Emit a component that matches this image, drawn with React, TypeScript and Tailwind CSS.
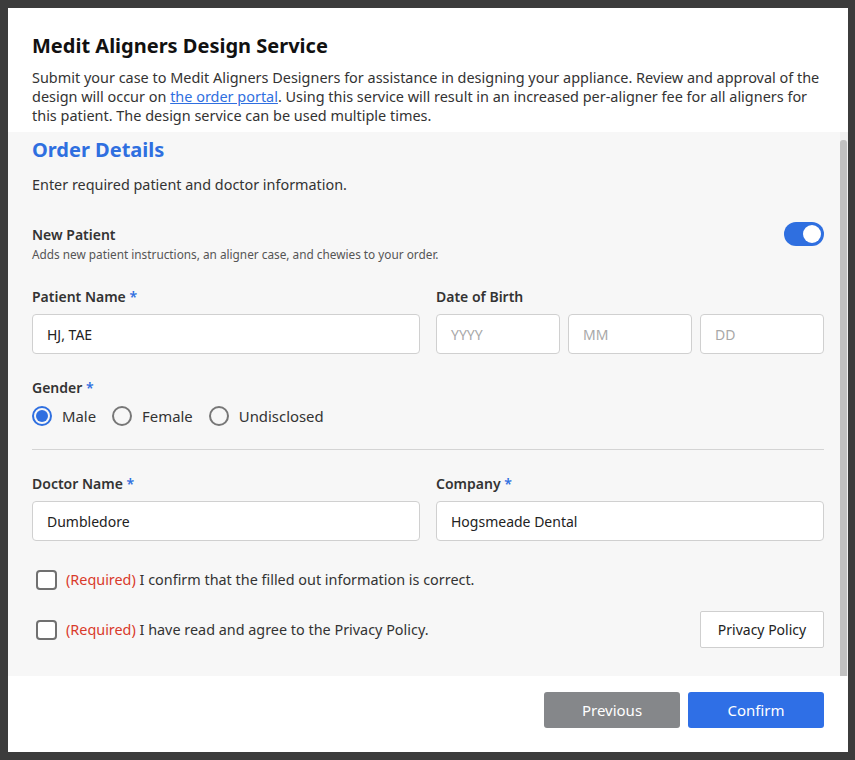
import React, { useState } from 'react';

const font = { fontFamily: '"Noto Sans", "Open Sans", sans-serif' };

const Label: React.FC<{ text: string; required?: boolean }> = ({ text, required }) => (
  <div className="text-[14px] leading-[20px] font-semibold text-[#333] mb-[7px]">
    {text}
    {required && <span className="text-[#2f6fe0]"> *</span>}
  </div>
);

const TextInput: React.FC<{ value?: string; placeholder?: string }> = ({ value, placeholder }) => (
  <div className="h-[40px] w-full rounded-[4px] border border-[#d0d0d0] bg-white px-[14px] flex items-center text-[14px]">
    {value ? <span className="text-[#222]">{value}</span> : <span className="text-[#a8a8a8]">{placeholder}</span>}
  </div>
);

const Radio: React.FC<{ label: string; checked: boolean; onClick: () => void }> = ({ label, checked, onClick }) => (
  <button onClick={onClick} className="flex items-center gap-[10px] text-[14.9px] leading-[20px] text-[#333]">
    {checked ? (
      <span className="w-[20px] h-[20px] rounded-full border-2 border-[#2f6fe0] flex items-center justify-center">
        <span className="w-[12px] h-[12px] rounded-full bg-[#2f6fe0]" />
      </span>
    ) : (
      <span className="w-[20px] h-[20px] rounded-full border-2 border-[#777]" />
    )}
    {label}
  </button>
);

const Check: React.FC<{ text: string }> = ({ text }) => (
  <div className="flex items-center gap-[9px] ml-[4px]">
    <span className="w-[21px] h-[20px] rounded-[4px] border-2 border-[#707070] bg-white" />
    <span className="text-[14.4px] leading-[20px] text-[#333]">
      <span className="text-[#d93a2b]">(Required)</span> {text}
    </span>
  </div>
);

export default function App() {
  const [gender, setGender] = useState('Male');
  const [newPatient, setNewPatient] = useState(true);

  return (
    <div className="w-[855px] h-[760px] bg-[#3c3c3c] p-[8px]" style={font}>
      <div className="w-[840px] h-[744px] bg-white flex flex-col">
        {/* Header */}
        <div className="px-[24px] pt-[24px] pb-[7px]">
          <h2 className="text-[20px] leading-[28px] font-bold text-[#111]">Medit Aligners Design Service</h2>
          <p className="mt-[8px] text-[14.45px] leading-[19px] text-[#333]">
            Submit your case to Medit Aligners Designers for assistance in designing your appliance. Review and approval of the
            design will occur on <a className="text-[#2f6fe0] underline">the order portal</a>. Using this service will result in an increased per-aligner fee for all aligners for
            this patient. The design service can be used multiple times.
          </p>
        </div>

        {/* Body */}
        <div className="flex-1 flex bg-[#f7f7f7] min-h-0">
          <div className="flex-1 pl-[24px] pr-[16px] pt-[4px] pb-[28px]">
            <h3 className="text-[20px] leading-[28px] font-bold text-[#2f6fe0]">Order Details</h3>
            <p className="mt-[11px] text-[14.4px] leading-[20px] text-[#333]">Enter required patient and doctor information.</p>

            <div className="mt-[30px] flex items-start justify-between">
              <div>
                <div className="text-[14px] leading-[20px] font-semibold text-[#333]">New Patient</div>
                <div className="text-[11.8px] leading-[16px] text-[#555] mt-[1px]">
                  Adds new patient instructions, an aligner case, and chewies to your order.
                </div>
              </div>
              <button
                onClick={() => setNewPatient(!newPatient)}
                className={`-mt-[3px] w-[40px] h-[24px] rounded-full flex items-center px-[3px] ${newPatient ? 'bg-[#2f6fe0] justify-end' : 'bg-[#bbb] justify-start'}`}
              >
                <span className="w-[18px] h-[18px] rounded-full bg-white" />
              </button>
            </div>

            <div className="mt-[25px] grid grid-cols-2 gap-[16px]">
              <div>
                <Label text="Patient Name" required />
                <TextInput value="HJ, TAE" />
              </div>
              <div>
                <Label text="Date of Birth" />
                <div className="grid grid-cols-3 gap-[8px]">
                  <TextInput placeholder="YYYY" />
                  <TextInput placeholder="MM" />
                  <TextInput placeholder="DD" />
                </div>
              </div>
            </div>

            <div className="mt-[24px]">
              <div className="text-[14px] leading-[20px] font-semibold text-[#333] mb-[8px]">
                Gender<span className="text-[#2f6fe0]"> *</span>
              </div>
              <div className="flex items-center gap-[16px]">
                {['Male', 'Female', 'Undisclosed'].map((g) => (
                  <Radio key={g} label={g} checked={gender === g} onClick={() => setGender(g)} />
                ))}
              </div>
            </div>

            <div className="mt-[23px] mb-[24px] h-px bg-[#d4d4d4]" />

            <div className="grid grid-cols-2 gap-[16px]">
              <div>
                <Label text="Doctor Name" required />
                <TextInput value="Dumbledore" />
              </div>
              <div>
                <Label text="Company" required />
                <TextInput value="Hogsmeade Dental" />
              </div>
            </div>

            <div className="mt-[29px]">
              <Check text="I confirm that the filled out information is correct." />
            </div>
            <div className="mt-[21px] flex items-center justify-between">
              <Check text="I have read and agree to the Privacy Policy." />
              <button className="w-[124px] h-[37px] bg-white border border-[#cfcfcf] rounded-[2px] text-[14px] text-[#222]">
                Privacy Policy
              </button>
            </div>
          </div>
          {/* scrollbar */}
          <div className="w-[8px] bg-[#f1f1f1] flex flex-col pt-[8px]">
            <div className="flex-1 w-[7px] bg-[#c1c1c1] rounded-t-[3px]" />
          </div>
        </div>

        {/* Footer */}
        <div className="flex justify-end gap-[8px] px-[24px] pt-[16px] pb-[24px]">
          <button className="w-[136px] h-[36px] rounded-[3px] bg-[#85878a] text-white text-[15px]">Previous</button>
          <button className="w-[136px] h-[36px] rounded-[3px] bg-[#2f6fe6] text-white text-[15px]">Confirm</button>
        </div>
      </div>
    </div>
  );
}
